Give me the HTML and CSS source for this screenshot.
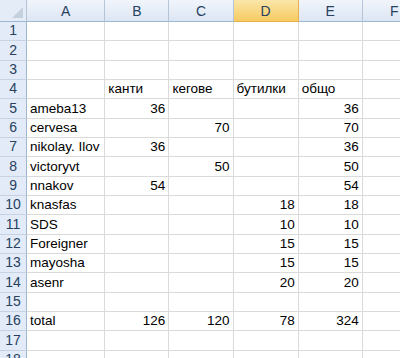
FILE: index.html
```html
<!DOCTYPE html>
<html lang="bg">
<head>
    <meta charset="UTF-8">
    <meta name="viewport" content="width=device-width, initial-scale=1.0">
    <title>Sheet1</title>
    <link rel="stylesheet" href="styles.css">
</head>
<body>
    <table class="sheet">
        <colgroup>
            <col class="col-head">
            <col class="col-a">
            <col class="col-n">
            <col class="col-n">
            <col class="col-d">
            <col class="col-n">
            <col class="col-n">
        </colgroup>
        <thead>
            <tr>
                <th class="corner"><span class="corner-mark"></span></th>
                <th>A</th>
                <th>B</th>
                <th>C</th>
                <th class="active">D</th>
                <th>E</th>
                <th>F</th>
            </tr>
        </thead>
        <tbody>
            <tr><th>1</th><td></td><td></td><td></td><td></td><td></td><td></td></tr>
            <tr><th>2</th><td></td><td></td><td></td><td></td><td></td><td></td></tr>
            <tr><th>3</th><td></td><td></td><td></td><td></td><td></td><td></td></tr>
            <tr><th>4</th><td></td><td>канти</td><td>кегове</td><td>бутилки</td><td>общо</td><td></td></tr>
            <tr><th>5</th><td>ameba13</td><td class="num">36</td><td></td><td></td><td class="num">36</td><td></td></tr>
            <tr><th>6</th><td>cervesa</td><td></td><td class="num">70</td><td></td><td class="num">70</td><td></td></tr>
            <tr><th>7</th><td>nikolay. Ilov</td><td class="num">36</td><td></td><td></td><td class="num">36</td><td></td></tr>
            <tr><th>8</th><td>victoryvt</td><td></td><td class="num">50</td><td></td><td class="num">50</td><td></td></tr>
            <tr><th>9</th><td>nnakov</td><td class="num">54</td><td></td><td></td><td class="num">54</td><td></td></tr>
            <tr><th>10</th><td>knasfas</td><td></td><td></td><td class="num">18</td><td class="num">18</td><td></td></tr>
            <tr><th>11</th><td>SDS</td><td></td><td></td><td class="num">10</td><td class="num">10</td><td></td></tr>
            <tr><th>12</th><td>Foreigner</td><td></td><td></td><td class="num">15</td><td class="num">15</td><td></td></tr>
            <tr><th>13</th><td>mayosha</td><td></td><td></td><td class="num">15</td><td class="num">15</td><td></td></tr>
            <tr><th>14</th><td>asenr</td><td></td><td></td><td class="num">20</td><td class="num">20</td><td></td></tr>
            <tr><th>15</th><td></td><td></td><td></td><td></td><td></td><td></td></tr>
            <tr><th>16</th><td>total</td><td class="num">126</td><td class="num">120</td><td class="num">78</td><td class="num">324</td><td></td></tr>
            <tr><th>17</th><td></td><td></td><td></td><td></td><td></td><td></td></tr>
            <tr><th>18</th><td></td><td></td><td></td><td></td><td></td><td></td></tr>
        </tbody>
    </table>
</body>
</html>
```

FILE: styles.css
```css
/* Spreadsheet view */
* {
    margin: 0;
    padding: 0;
    box-sizing: border-box;
}

body {
    background: #fff;
    overflow: hidden;
    font-family: 'Liberation Sans', Arial, sans-serif;
    font-size: 13.5px;
    color: #000;
}

.sheet {
    table-layout: fixed;
    border-collapse: separate;
    border-spacing: 0;
    width: 427px;
}

.col-head { width: 27px; }
.col-a { width: 78px; }
.col-n { width: 64px; }
.col-d { width: 65px; }

/* Column letters */
.sheet thead th {
    height: 22px;
    font-weight: normal;
    font-size: 14px;
    color: #27415f;
    background: linear-gradient(#f1f5fb, #dce6f4);
    border-right: 1px solid #b5c4d8;
    border-bottom: 1px solid #9eb6ce;
    text-align: center;
    vertical-align: middle;
    padding-top: 1px;
}

.sheet thead th.active {
    color: #27415f;
    background: linear-gradient(#fbe6a9, #f6cb62);
    border-right-color: #e8b04a;
    border-bottom-color: #e8b04a;
}

.sheet thead th.corner {
    position: relative;
    background: #e4ecf7;
}

.corner-mark {
    position: absolute;
    right: 3px;
    bottom: 3px;
    width: 0;
    height: 0;
    border-left: 11px solid transparent;
    border-bottom: 11px solid #c5d0de;
}

/* Row numbers */
.sheet tbody th {
    height: 19.33px;
    font-weight: normal;
    font-size: 14px;
    color: #27415f;
    background: #e2ebf7;
    border-right: 1px solid #9eb6ce;
    border-bottom: 1px solid #c7d3e3;
    text-align: center;
    vertical-align: bottom;
    line-height: 15px;
    padding-bottom: 2px;
}

/* Cells */
.sheet td {
    height: 19.33px;
    border-right: 1px solid #dadada;
    border-bottom: 1px solid #dadada;
    vertical-align: bottom;
    line-height: 15px;
    padding: 0 3px 2px 3px;
    white-space: nowrap;
    overflow: hidden;
}

.sheet td.num {
    text-align: right;
}
```
